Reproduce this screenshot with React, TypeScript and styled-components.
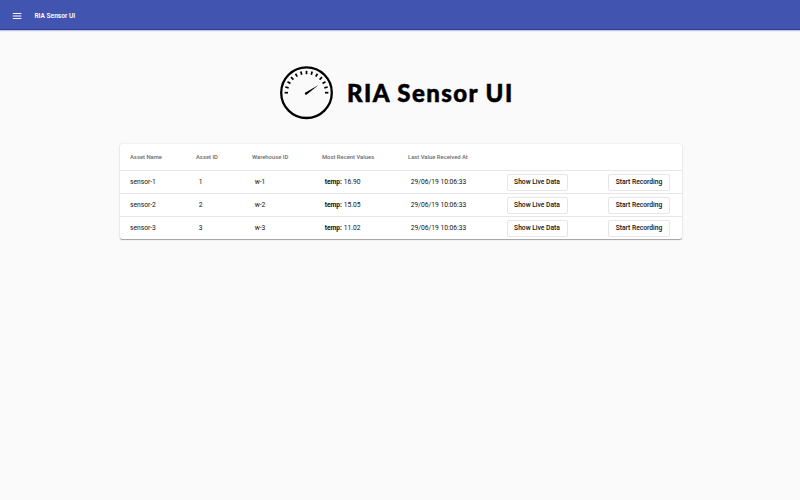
import React from "react";
import styled, { createGlobalStyle } from "styled-components";

const GlobalStyle = createGlobalStyle`
  * { box-sizing: border-box; }
  body { margin: 0; background: #fafafa; font-family: Roboto, sans-serif; color: #111; }
`;

const Page = styled.div`
  min-height: 500px;
  background: #fafafa;
`;

const AppBar = styled.header`
  display: flex;
  align-items: center;
  height: 30px;
  padding: 2px 12px 0;
  background: #4154af;
  border-bottom: 1px solid #30409a;
  box-shadow: 0 1px 1px rgba(63, 81, 181, 0.3);
`;

const MenuButton = styled.button`
  display: flex;
  padding: 0;
  border: 0;
  background: none;
  margin-right: 12.4px;
`;

const AppTitle = styled.span`
  color: #fff;
  font-size: 6.6px;
  font-weight: 600;
  line-height: 10px;
`;

const Hero = styled.div`
  display: flex;
  align-items: center;
  height: 54px;
  margin: 36px 0 0 279px;
`;

const HeroTitle = styled.h1`
  margin: 0 0 0 13px;
  font-family: Lato, sans-serif;
  font-size: 24px;
  font-weight: 900;
  line-height: 30px;
  letter-spacing: 1.42px;
  -webkit-text-stroke: 0.5px #000;
  white-space: nowrap;
  color: #000;
`;

const Table = styled.div`
  width: 562px;
  margin: 24px 0 0 119.5px;
  background: #fff;
  border-radius: 2px;
  box-shadow: 0 1px 1px rgba(0, 0, 0, 0.34), 0 0 1.5px rgba(0, 0, 0, 0.16);
`;

const Row = styled.div<{ $head?: boolean }>`
  display: grid;
  grid-template-columns: 66px 56px 70px 86px 98.5px 101.5px 1fr;
  align-items: center;
  height: ${(p) => (p.$head ? 27 : 23)}px;
  padding-left: 10.5px;
  border-bottom: 1px solid #e6e6e6;
  &:last-child { height: 22px; border-bottom: 0; }
`;

const Cell = styled.span<{ $inset?: boolean }>`
  padding-left: ${(p) => (p.$inset ? 2.7 : 0)}px;
  font-size: 6.7px;
  line-height: 10px;
  white-space: nowrap;
`;

const HeadCell = styled(Cell)`
  font-size: 5.85px;
  font-weight: 500;
  color: #6c6c6c;
`;

const Label = styled.b`
  font-weight: 700;
`;

const Action = styled.button<{ $width: number }>`
  width: ${(p) => p.$width}px;
  height: 17px;
  padding: 0;
  border: 1px solid #e6e6e6;
  border-radius: 2px;
  background: #fff;
  color: #111;
  font-family: Roboto, sans-serif;
  font-size: 6.7px;
  font-weight: 500;
  line-height: 15px;
  white-space: nowrap;
`;

const headings = ["Asset Name", "Asset ID", "Warehouse ID", "Most Recent Values", "Last Value Received At"];

const sensors = [
  { id: 1, temp: "16.90" },
  { id: 2, temp: "15.05" },
  { id: 3, temp: "11.02" },
];

const tickAngles = Array.from({ length: 13 }, (_, i) => -90 + i * 15);

function Gauge() {
  return (
    <svg width="55" height="54" viewBox="0 0 55 54">
      <circle cx="27.5" cy="26.7" r="25.3" fill="none" stroke="#000" strokeWidth="2.3" />
      {tickAngles.map((a) => (
        <path key={a} d="M27.5 4.8V8.2" stroke="#000" strokeWidth="1.7" transform={`rotate(${a} 27.5 26.7)`} />
      ))}
      <path d="M26 26.8 39.6 19 28.1 28.2A1.2 1.2 0 1 1 26 26.8Z" fill="#000" />
    </svg>
  );
}

export default function App() {
  return (
    <Page>
      <GlobalStyle />
      <AppBar>
        <MenuButton aria-label="Menu">
          <svg width="10" height="8" viewBox="0 0 10 8">
            <path d="M.8 1.5h8.6M.8 4h8.6M.8 6.5h8.6" stroke="#fff" strokeWidth="1" />
          </svg>
        </MenuButton>
        <AppTitle>RIA Sensor UI</AppTitle>
      </AppBar>
      <Hero>
        <Gauge />
        <HeroTitle>RIA Sensor UI</HeroTitle>
      </Hero>
      <Table>
        <Row $head>
          {headings.map((h) => (
            <HeadCell key={h}>{h}</HeadCell>
          ))}
        </Row>
        {sensors.map((s) => (
          <Row key={s.id}>
            <Cell>sensor-{s.id}</Cell>
            <Cell $inset>{s.id}</Cell>
            <Cell $inset>w-{s.id}</Cell>
            <Cell $inset>
              <Label>temp:</Label> {s.temp}
            </Cell>
            <Cell $inset>29/06/19 10:06:33</Cell>
            <Action $width={61}>Show Live Data</Action>
            <Action $width={62}>Start Recording</Action>
          </Row>
        ))}
      </Table>
    </Page>
  );
}
